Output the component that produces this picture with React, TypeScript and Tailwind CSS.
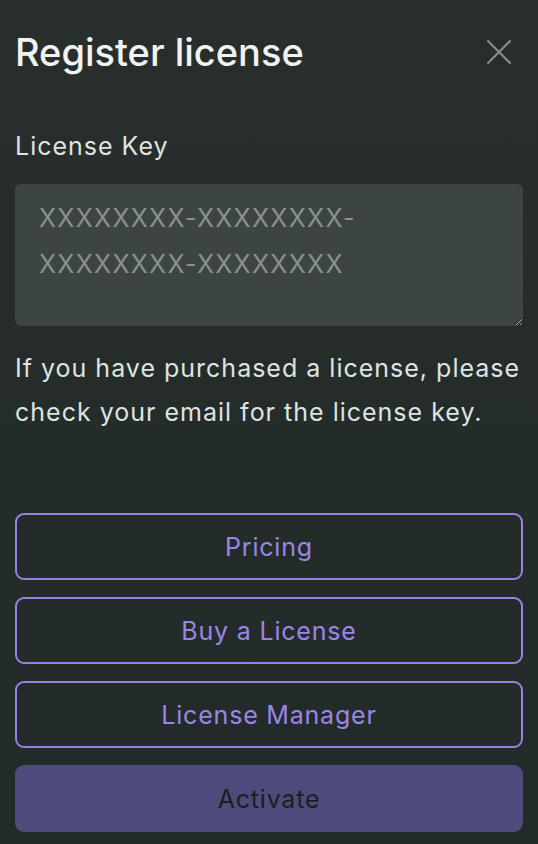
const buttons = ['Pricing', 'Buy a License', 'License Manager'];

export default function App() {
  return (
    <div
      className="w-[538px] h-[844px] overflow-hidden bg-gradient-to-b from-[#282e2b] to-[#212b29] px-[15px] text-[#e8ebe9]"
      style={{ fontFamily: 'Inter, "Noto Sans", sans-serif' }}
    >
      <div className="flex items-center justify-between pt-[26px]">
        <h1 className="text-[38px] leading-[52px] font-medium text-[#f1f3f2]">
          Register license
        </h1>
        <button className="mr-[12px] text-[#8a8f8c]">
          <svg width="24" height="24" viewBox="0 0 24 24" fill="none" stroke="currentColor" strokeWidth="2" strokeLinecap="round">
            <path d="M1 1L23 23M23 1L1 23" />
          </svg>
        </button>
      </div>

      <label className="mt-[50px] block text-[25px] leading-[36px] tracking-[1px] text-[#dfe3e1]">
        License Key
      </label>

      <textarea
        className="mt-[20px] block h-[142px] w-full resize-y rounded-[6px] bg-[#3c4542] px-[24px] py-[11px] text-[25px] leading-[46px] tracking-[1.3px] text-[#e8ebe9] placeholder:text-[#8b918e] outline-none"
        placeholder="XXXXXXXX-XXXXXXXX-XXXXXXXX-XXXXXXXX"
      />

      <p className="mt-[20px] text-[25px] leading-[44px] tracking-[1px] text-[#dfe3e1]">
        If you have purchased a license, please check your email for the license key.
      </p>

      <div className="mt-[79px] flex flex-col gap-[17px]">
        {buttons.map((b) => (
          <button
            key={b}
            className="h-[67px] w-full rounded-[9px] border-2 border-[#9a82e4] pt-[2px] text-[25px] tracking-[0.8px] text-[#9c85e8]"
          >
            {b}
          </button>
        ))}
        <button className="h-[67px] w-full rounded-[9px] bg-[#4f4a7c] pt-[2px] text-[25px] tracking-[0.8px] text-[#1a1f1d]">
          Activate
        </button>
      </div>
    </div>
  );
}
